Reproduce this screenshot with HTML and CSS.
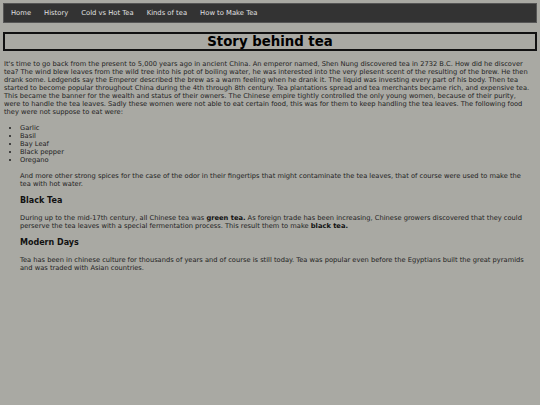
FILE: index.html
```html
<!DOCTYPE html>
<html>
<head>
<meta charset="utf-8">
<link rel="stylesheet" href="styles.css">
</head>
<body>
<nav class="nav">
  <a href="#">Home</a>
  <a href="#">History</a>
  <a href="#">Cold vs Hot Tea</a>
  <a href="#">Kinds of tea</a>
  <a href="#">How to Make Tea</a>
</nav>
<h1 class="title">Story behind tea</h1>
<p class="intro">It's time to go back from the present to 5,000 years ago in ancient China. An emperor named, Shen Nung discovered tea in 2732 B.C. How did he discover tea? The wind blew leaves from the wild tree into his pot of boiling water, he was interested into the very plesent scent of the resulting of the brew. He then drank some. Ledgends say the Emperor described the brew as a warm feeling when he drank it. The liquid was investing every part of his body. Then tea started to become popular throughout China during the 4th through 8th century. Tea plantations spread and tea merchants became rich, and expensive tea. This became the banner for the wealth and status of their owners. The Chinese empire tightly controlled the only young women, because of their purity, were to handle the tea leaves. Sadly these women were not able to eat certain food, this was for them to keep handling the tea leaves. The following food they were not suppose to eat were:</p>
<ul class="list">
  <li>Garlic</li>
  <li>Basil</li>
  <li>Bay Leaf</li>
  <li>Black pepper</li>
  <li>Oregano</li>
</ul>
<div class="section">
  <p>And more other strong spices for the case of the odor in their fingertips that might contaminate the tea leaves, that of course were used to make the tea with hot water.</p>
  <h2>Black Tea</h2>
  <p>During up to the mid-17th century, all Chinese tea was <b>green tea.</b> As foreign trade has been increasing, Chinese growers discovered that they could perserve the tea leaves with a special fermentation process. This result them to make <b>black tea.</b></p>
  <h2>Modern Days</h2>
  <p>Tea has been in chinese culture for thousands of years and of course is still today. Tea was popular even before the Egyptians built the great pyramids and was traded with Asian countries.</p>
</div>
</body>
</html>
```
FILE: styles.css
```css
html, body {
  background: #a9a9a3;
}
body {
  margin: 3px;
  font-family: "DejaVu Sans", Verdana, sans-serif;
  font-size: 6.7px;
  line-height: 8px;
  color: #1e1e1e;
}
.nav {
  display: flex;
  align-items: center;
  height: 20px;
  background: #333333;
  border: 1px solid #555;
  box-sizing: border-box;
  padding-left: 7px;
  gap: 13px;
}
.nav a {
  color: #e0e0e0;
  text-decoration: none;
  font-size: 6.8px;
}
.title {
  margin: 9px 0 0;
  border: 2px solid #111;
  text-align: center;
  font-size: 13.3px;
  line-height: 15px;
  font-weight: bold;
  color: #000;
  padding: 0;
}
.intro {
  margin: 9px 5px 0 1px;
}
.list {
  margin: 8px 0 0;
  padding-left: 17px;
}
.section {
  padding-left: 17px;
  padding-right: 5px;
}
.section p {
  margin: 8px 0 0;
}
.section h2 {
  font-size: 8px;
  line-height: 10px;
  margin: 8px 0 0;
  color: #111;
}
b { color: #111; }
```
